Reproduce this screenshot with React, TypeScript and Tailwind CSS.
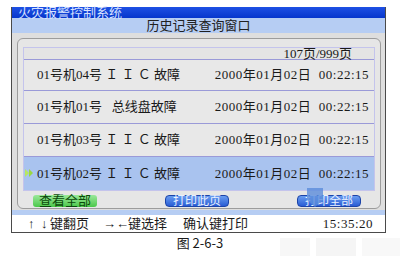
const FONT = { fontFamily: '"Liberation Serif", "Noto Sans CJK SC", serif' };

const ROWS = [
  { name: "01号机04号 Ｉ Ｉ Ｃ 故障", time: "2000年01月02日  00:22:15", h: "h-[31px]" },
  { name: "01号机01号   总线盘故障", time: "2000年01月02日  00:22:15", h: "h-[33px]" },
  { name: "01号机03号 Ｉ Ｉ Ｃ 故障", time: "2000年01月02日  00:22:15", h: "h-[33px]" },
  { name: "01号机02号 Ｉ Ｉ Ｃ 故障", time: "2000年01月02日  00:22:15", h: "h-[33px]", active: true },
];

function Marker() {
  return (
    <svg width="9" height="8" viewBox="0 0 9 8" className="absolute left-[1px] top-[12px]">
      <polygon points="0,0 4,4 0,8" fill="#b8e860" />
      <polygon points="4,0 8,4 4,8" fill="#9ad840" />
    </svg>
  );
}

export default function App() {
  return (
    <div className="relative h-[256px] w-[400px] overflow-hidden bg-white pt-[7px] text-[13px] text-[#1a1a1a]" style={FONT}>
      <div className="ml-[11px] w-[375px] border-x border-b border-[#4a4a4a]">
        {/* title */}
        <div className="h-[11px] bg-gradient-to-b from-[#1e50e4] to-[#0636cc] pl-[6px] text-[13px] leading-[11px] text-[#d8e2ff]">
          火灾报警控制系统
        </div>
        <div className="h-[15px] bg-[#b6cdf3] text-center text-[13px] leading-[16px] text-[#202020]">
          历史记录查询窗口
        </div>

        {/* content */}
        <div className="bg-[#dedede] pb-[1px] pl-[5px] pr-[4px] pt-[5px]">
          <div className="rounded-[6px] border border-[#9c9c9c] bg-[#e6e6e6] pb-[1px] pl-[5px] pr-[5px] pt-[8px]">
            <div className="border border-[#c4c4ec]">
              <div className="h-[12px] border-b border-[#9a9ad8] bg-[#e4e4e4] pr-[22px] text-right leading-[12px]">
                107页/999页
              </div>
              {ROWS.map((r, i) => (
                <div
                  key={i}
                  className={`relative flex items-center justify-between whitespace-pre pl-[13px] pr-[5px] ${r.h} ${
                    i < ROWS.length - 1 ? "border-b border-[#9a9ad8]" : ""
                  } ${r.active ? "bg-[#a9c3ef]" : "bg-[#e8e8e8]"}`}
                >
                  {r.active && <Marker />}
                  <span>{r.name}</span>
                  <span className="tracking-[0.5px]">{r.time}</span>
                </div>
              ))}
            </div>
            <div className="mt-[4px] flex h-[12px] gap-[68px] pl-[10px]">
              <div className="flex w-[64px] items-center justify-center rounded-[3px] bg-gradient-to-b from-[#9ae89a] to-[#48c848] text-[13px] leading-[12px] text-[#0c4a0c]">
                查看全部
              </div>
              <div className="flex w-[64px] items-center justify-center rounded-[4px] border border-[#1c44a8] bg-gradient-to-b from-[#6a9cf0] to-[#2a5cd4] text-[12px] leading-[10px] text-[#e8f0ff]">
                打印此页
              </div>
              <div className="flex w-[64px] items-center justify-center rounded-[4px] border border-[#1c44a8] bg-gradient-to-b from-[#6a9cf0] to-[#2a5cd4] text-[12px] leading-[10px] text-[#e8f0ff]">
                打印全部
              </div>
            </div>
          </div>
        </div>

        <div className="h-[5px] bg-[#b6cdf3]" />
        <div className="flex h-[17px] items-center bg-white pl-[16px] pr-[12px] leading-[17px]">
          <span className="w-[22px] whitespace-pre">↑  ↓</span>
          <span className="w-[53px]">键翻页</span>
          <span className="w-[25px] whitespace-pre">→←</span>
          <span className="w-[55px]">键选择</span>
          <span>确认键打印</span>
          <span className="ml-auto tracking-[0.5px]">15:35:20</span>
        </div>
      </div>

      <div className="mt-[2px] text-center leading-[15px] text-[13px]" style={{ fontFamily: '"Noto Sans CJK SC", sans-serif' }}>
        图 2-6-3
      </div>

      {/* cursor blob over the print-all button */}
      <svg width="20" height="20" viewBox="0 0 20 20" className="absolute left-[305px] top-[188px] opacity-80">
        <polygon points="2,0 18,0 18,12 10,19 2,12" fill="#5c8ddc" />
      </svg>

      {/* faint watermark */}
      <div className="absolute left-[280px] top-[238px] flex h-[18px] w-[120px] gap-[6px]">
        <div className="w-[30px] bg-[#f7f7f7]" />
        <div className="w-[40px] bg-[#f5f5f5]" />
        <div className="w-[38px] bg-[#f8f8f8]" />
      </div>
    </div>
  );
}
